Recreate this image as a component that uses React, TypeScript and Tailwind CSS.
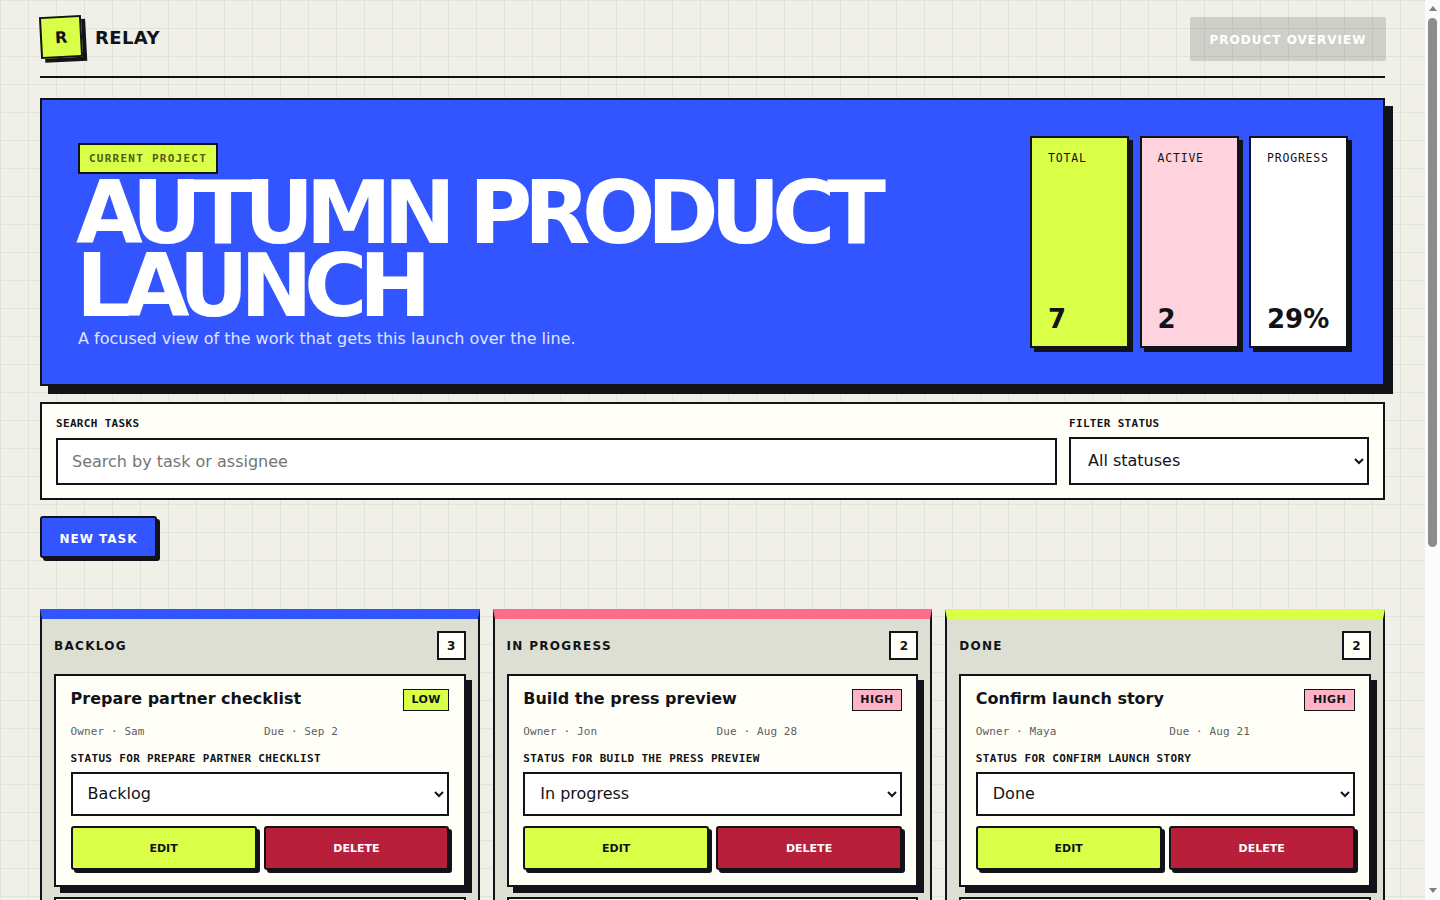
const sans = "font-['DejaVu_Sans',sans-serif]";

type Task = {
  title: string;
  owner: string;
  due: string;
  priority: "LOW" | "MEDIUM" | "HIGH";
  status: string;
};

type Column = {
  name: string;
  bar: string;
  tasks: Task[];
};

const COLUMNS: Column[] = [
  {
    name: "BACKLOG",
    bar: "border-t-[#3355ff]",
    tasks: [
      { title: "Prepare partner checklist", owner: "Sam", due: "Sep 2", priority: "LOW", status: "Backlog" },
      { title: "Write launch email", owner: "Ava", due: "Sep 4", priority: "MEDIUM", status: "Backlog" },
      { title: "Schedule social posts", owner: "Leo", due: "Sep 6", priority: "LOW", status: "Backlog" },
    ],
  },
  {
    name: "IN PROGRESS",
    bar: "border-t-[#ff6b8b]",
    tasks: [
      { title: "Build the press preview", owner: "Jon", due: "Aug 28", priority: "HIGH", status: "In progress" },
      { title: "Record product demo", owner: "Nia", due: "Aug 30", priority: "MEDIUM", status: "In progress" },
    ],
  },
  {
    name: "DONE",
    bar: "border-t-[#d9ff47]",
    tasks: [
      { title: "Confirm launch story", owner: "Maya", due: "Aug 21", priority: "HIGH", status: "Done" },
      { title: "Approve pricing page", owner: "Eli", due: "Aug 19", priority: "MEDIUM", status: "Done" },
    ],
  },
];

const PRIORITY_BADGE: Record<Task["priority"], string> = {
  LOW: "bg-[#d9ff47]",
  MEDIUM: "bg-[#ffe08a]",
  HIGH: "bg-[#ffb3c7]",
};

const STATS = [
  { label: "TOTAL", value: "7", bg: "bg-[#d9ff47]" },
  { label: "ACTIVE", value: "2", bg: "bg-[#ffd3de]" },
  { label: "PROGRESS", value: "29%", bg: "bg-white" },
];

function TaskCard({ task }: { task: Task }) {
  return (
    <div className="border-2 border-[#111318] bg-[#fffff8] pt-[12px] pr-[14.4px] pb-[15px] pl-[14.6px] shadow-[6px_6px_0_#111318]">
      <div className="flex items-start justify-between gap-3">
        <div className="pt-[1px] text-[16px] leading-[20px] font-bold text-[#111318]">{task.title}</div>
        <span
          className={`mt-[1px] border border-[#111318] px-[7.5px] text-[11px] leading-[20px] font-bold tracking-[0.4px] text-[#111318] ${PRIORITY_BADGE[task.priority]}`}
        >
          {task.priority}
        </span>
      </div>
      <div className="mt-[14px] grid grid-cols-2 gap-2 font-['DejaVu_Sans_Mono',monospace] text-[11px] leading-[14px] tracking-[0.1px] text-[#5c5f62]">
        <span>Owner · {task.owner}</span>
        <span>Due · {task.due}</span>
      </div>
      <div className="mt-[13px] font-['DejaVu_Sans_Mono',monospace] text-[11px] leading-[14px] font-bold tracking-[0.33px] text-[#111318] uppercase">
        Status for {task.title}
      </div>
      <select
        defaultValue={task.status}
        className={`mt-[6px] block h-[44px] w-full rounded-none border-2 border-[#111318] bg-white pb-[2px] pl-[11px] text-[16px] text-[#111318] ${sans}`}
      >
        <option>Backlog</option>
        <option>In progress</option>
        <option>Done</option>
      </select>
      <div className="mt-[10px] grid grid-cols-2 gap-[7px]">
        <button className="h-[44px] rounded-[3px] border-2 border-[#111318] bg-[#d9ff47] pt-[2px] text-[11px] font-bold text-[#111318] shadow-[3px_3px_0_#111318]">
          EDIT
        </button>
        <button className="h-[44px] rounded-[3px] border-2 border-[#111318] bg-[#b71f3b] pt-[2px] text-[11px] font-bold text-white shadow-[3px_3px_0_#111318]">
          DELETE
        </button>
      </div>
    </div>
  );
}

function ScrollRail() {
  return (
    <div className="flex h-screen w-[15px] shrink-0 flex-col items-center bg-[#fbfbfb]">
      <div className="mt-[6px] h-0 w-0 border-x-[4px] border-b-[5px] border-x-transparent border-b-[#7f7f7f]" />
      <div className="mt-[7px] h-[529px] w-[9px] rounded-[5px] bg-[#8c8c8c]" />
      <div className="mt-auto mb-[7px] h-0 w-0 border-x-[4px] border-t-[5px] border-x-transparent border-t-[#7f7f7f]" />
    </div>
  );
}

export default function App() {
  return (
    <div className="flex h-screen overflow-hidden">
      <div
        className={`h-screen min-w-0 flex-1 overflow-y-auto bg-[#f0f0e8] bg-[linear-gradient(#e2e3d9_1px,transparent_1px),linear-gradient(90deg,#e2e3d9_1px,transparent_1px)] bg-[size:28px_28px] bg-local px-[40px] pt-[16px] pb-[120px] text-[#111318] ${sans}`}
      >
        {/* Header */}
        <header className="flex items-start justify-between border-b-2 border-[#111318] pb-[15px]">
          <div className="flex items-center gap-[13px]">
            <div className="flex h-[42px] w-[42px] -rotate-3 items-center justify-center border-2 border-[#111318] bg-[#d9ff47] pt-[2px] text-[16px] font-bold shadow-[4px_4px_0_#111318]">
              R
            </div>
            <span className="text-[18px] font-bold tracking-[0.4px]">RELAY</span>
          </div>
          <div className="mt-[1px] -mr-[1px] flex h-[44px] w-[196px] items-center justify-center rounded-[2px] bg-[#111318]/15 pt-[1px] text-[12px] font-bold tracking-[1px] text-white">
            PRODUCT OVERVIEW
          </div>
        </header>

        {/* Hero */}
        <section className="mt-[20px] flex h-[288px] items-stretch justify-between border-2 border-[#111318] bg-[#3355ff] p-[36px] shadow-[8px_8px_0_#111318]">
          <div className="min-w-0">
            <span className="mt-[7px] block w-fit border-2 border-[#111318] bg-[#d9ff47] px-[9px] font-['DejaVu_Sans_Mono',monospace] text-[11px] leading-[27px] font-bold tracking-[1.25px] text-[#4f5b20]">
              CURRENT PROJECT
            </span>
            <h1 className="mt-[3px] -ml-[2px] w-[880px] text-[86.4px] leading-[72.5px] font-bold tracking-[-8.4px] text-white">
              AUTUMN PRODUCT LAUNCH
            </h1>
            <p className="mt-[5px] text-[16px] leading-[24px] text-[#dfe4ff]">
              A focused view of the work that gets this launch over the line.
            </p>
          </div>
          <div className="-mr-[1px] flex shrink-0 gap-[10.5px]">
            {STATS.map((stat) => (
              <div
                key={stat.label}
                className={`flex w-[99px] flex-col justify-between border-2 border-[#111318] pt-[12px] pr-[8px] pb-[12px] pl-[16px] shadow-[4px_4px_0_#111318] ${stat.bg}`}
              >
                <span className="font-['DejaVu_Sans_Mono',monospace] text-[11.5px] leading-[16px] tracking-[0.8px]">
                  {stat.label}
                </span>
                <span className="text-[26px] leading-[30px] font-bold">{stat.value}</span>
              </div>
            ))}
          </div>
        </section>

        {/* Filters */}
        <section className="mt-[16px] grid grid-cols-[1001px_300px] gap-[12px] border-2 border-[#111318] bg-[#fffff8] px-[14px] pt-[13px] pb-[13px]">
          <label className="block">
            <span className="block font-['DejaVu_Sans_Mono',monospace] text-[11px] leading-[14px] font-bold tracking-[0.33px]">
              SEARCH TASKS
            </span>
            <input
              placeholder="Search by task or assignee"
              className="mt-[7px] block h-[47px] w-full rounded-none border-2 border-[#111318] bg-white pl-[14px] text-[16px] outline-none placeholder:text-[#757575]"
            />
          </label>
          <label className="block">
            <span className="block font-['DejaVu_Sans_Mono',monospace] text-[11px] leading-[14px] font-bold tracking-[0.33px]">
              FILTER STATUS
            </span>
            <select className="mt-[6px] block h-[48px] w-full rounded-none border-2 border-[#111318] bg-white pb-[2px] pl-[13px] text-[16px]">
              <option>All statuses</option>
              <option>Backlog</option>
              <option>In progress</option>
              <option>Done</option>
            </select>
          </label>
        </section>

        <button className="mt-[16px] block h-[42px] w-[117px] rounded-[3px] border-2 border-[#111318] bg-[#3355ff] pt-[3px] text-[12px] font-bold tracking-[1px] text-white shadow-[3px_3px_0_#111318]">
          NEW TASK
        </button>

        {/* Board */}
        <section className="mt-[51px] grid grid-cols-3 items-start gap-[12.8px]">
          {COLUMNS.map((col) => (
            <div
              key={col.name}
              className={`border-2 border-t-[10px] border-[#111318] bg-[#dedfd3] ${col.bar}`}
            >
              <div className="flex flex-col gap-[10px] px-[12px] pt-[12px] pb-[14px]">
                <div className="mb-[4px] flex items-center justify-between">
                  <span className="text-[12px] font-bold tracking-[1.3px]">{col.name}</span>
                  <span className="flex h-[29px] w-[29px] items-center justify-center border-2 border-[#111318] bg-[#fffff8] text-[12px] font-bold">
                    {col.tasks.length}
                  </span>
                </div>
                {col.tasks.map((task) => (
                  <TaskCard key={task.title} task={task} />
                ))}
              </div>
            </div>
          ))}
        </section>
      </div>
      <ScrollRail />
    </div>
  );
}
